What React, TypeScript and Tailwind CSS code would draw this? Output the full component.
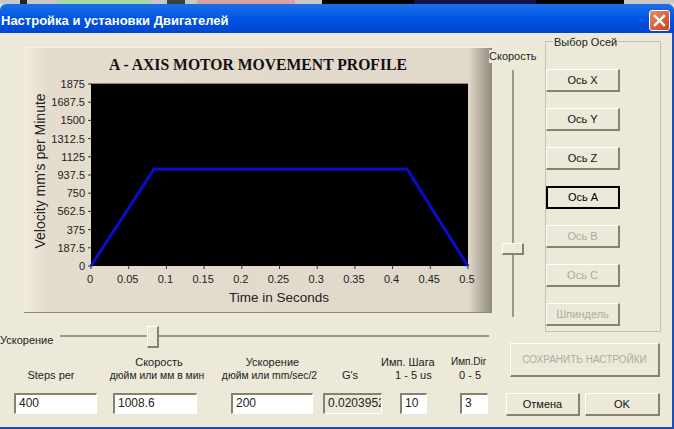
const yTicks = ["1875", "1687.5", "1500", "1312.5", "1125", "937.5", "750", "562.5", "375", "187.5", "0"];
const xTicks = ["0", "0.05", "0.1", "0.15", "0.2", "0.25", "0.3", "0.35", "0.4", "0.45", "0.5"];

const raised = "bg-[#ece9d8] border-t border-l border-t-white border-l-white border-r-2 border-b-2 border-r-[#85826f] border-b-[#85826f]";

function Chart() {
  // svg origin is the panel's top left corner (24,47)
  const plotL = 67;
  const plotR = 444;
  const plotT = 36;
  const plotB = 218;
  const stepY = (plotB - plotT) / 10;
  const stepX = (plotR - plotL) / 10;
  return (
    <svg width="468" height="264" className="block">
      <rect x={plotL} y={plotT} width={plotR - plotL} height={plotB - plotT} fill="#000" />
      <rect x={plotL - 1} y={plotT - 1} width={plotR - plotL + 1} height="1" fill="#8f8a7c" />
      {yTicks.map((t, i) => (
        <g key={t}>
          <line x1={plotL - 3} x2={plotL} y1={plotT + i * stepY} y2={plotT + i * stepY} stroke="#333" />
          <text x={plotL - 6} y={plotT + i * stepY + 4} textAnchor="end" fontSize="11" fill="#222" fontFamily="Liberation Sans">
            {t}
          </text>
        </g>
      ))}
      {xTicks.map((t, i) => (
        <g key={t}>
          <line x1={plotL + i * stepX} x2={plotL + i * stepX} y1={plotB} y2={plotB + 3} stroke="#333" />
          <text x={plotL + i * stepX - 1} y={plotB + 17} textAnchor="middle" fontSize="11" fill="#222" fontFamily="Liberation Sans">
            {t}
          </text>
        </g>
      ))}
      <polyline
        points={`${plotL},${plotB} 130,121 383,121 ${plotR},${plotB}`}
        fill="none"
        stroke="#0c0cd0"
        strokeWidth="3"
      />
      <text x="255" y="254" textAnchor="middle" fontSize="13.5" fill="#222" fontFamily="Liberation Sans">
        Time in Seconds
      </text>
      <text
        x="0"
        y="0"
        textAnchor="middle"
        fontSize="14"
        fill="#222"
        fontFamily="Liberation Sans"
        transform="translate(21,123) rotate(-90)"
      >
        Velocity mm's per Minute
      </text>
    </svg>
  );
}

function AxisButton({ label, state }: { label: string; state?: "active" | "disabled" }) {
  if (state === "active") {
    return (
      <div className="w-[74px] h-[23px] text-[11px] flex items-center justify-center bg-[#ece9d8] border-2 border-black text-black">
        {label}
      </div>
    );
  }
  return (
    <div className={`w-[74px] h-[23px] text-[11px] flex items-center justify-center ${raised} ${state === "disabled" ? "text-[#aeaba0]" : "text-[#111]"}`}>
      {label}
    </div>
  );
}

function Field({ value, className, disabled }: { value: string; className: string; disabled?: boolean }) {
  return (
    <div
      className={`h-[21px] border-t-2 border-l-2 border-t-[#85826f] border-l-[#85826f] border-r border-b border-r-white border-b-white pl-[3px] text-[12px] leading-[17px] overflow-hidden whitespace-nowrap text-[#222] ${
        disabled ? "bg-[#ece9d8]" : "bg-white"
      } ${className}`}
    >
      {value}
    </div>
  );
}

export default function App() {
  return (
    <div className="w-[674px] h-[429px] overflow-hidden bg-[#ece9d8] flex flex-col font-['Liberation_Sans',sans-serif]">
      <div className="h-[4px] flex shrink-0 bg-[#c8c8c8]">
        <div className="w-[20px]" />
        <div className="w-[7px] bg-[#222]" />
        <div className="w-[31px]" />
        <div className="w-[92px] bg-[#a8d8a8]" />
        <div className="w-[17px]" />
        <div className="w-[18px] bg-[#33463c]" />
        <div className="w-[12px]" />
        <div className="w-[98px] bg-[#d8a0a0]" />
        <div className="w-[27px]" />
        <div className="w-[92px] bg-black" />
        <div className="w-[122px] bg-[#10104a]" />
        <div className="w-[88px] bg-black" />
      </div>

      <div className="h-[29px] shrink-0 flex items-center justify-between pt-[4px] pr-[4px] pl-[1px] rounded-t-[6px] bg-gradient-to-b from-[#1c6ee8] via-[#0055e3] to-[#0046cc]">
        <span className="text-white font-bold text-[13px]">Настройка и установки Двигателей</span>
        <div className="w-[21px] h-[21px] rounded-[3px] border border-white bg-gradient-to-br from-[#e88a6a] to-[#c8401c] flex items-center justify-center">
          <svg width="13" height="13" viewBox="0 0 13 13">
            <path d="M2 2 L11 11 M11 2 L2 11" stroke="#fff" strokeWidth="2.4" strokeLinecap="square" />
          </svg>
        </div>
      </div>

      <div className="flex flex-1 min-h-0 border-b-2 border-b-[#1f50b8] border-r-2 border-r-[#1f50b8]">
        <div className="w-[489px] shrink-0 flex flex-col">
          <div className="ml-[24px] mt-[14px] w-[468px] h-[266px] shrink-0 flex flex-col bg-[linear-gradient(to_right,#f2ecdc_0%,#e4dccd_5%,#e0d9ca_95%,#8f897b_100%)] border-t border-t-[#f4f0e4] border-b border-b-[#8f8a7c]">
            <div className="h-[36px] pt-[7px] text-center text-[15.7px] leading-[20px] font-bold font-['Liberation_Serif',serif] text-[#111]">
              A - AXIS MOTOR MOVEMENT PROFILE
            </div>
            <div className="-mt-[36px]">
              <Chart />
            </div>
          </div>

          <div className="flex items-center mt-[16px] h-[16px] shrink-0">
            <span className="text-[11px] text-[#222] w-[60px] mt-[6px]">Ускорение</span>
            <div className="relative w-[430px] h-[2px] bg-[#9c9888] -mt-[2px]">
              <div className={`absolute left-[87px] -top-[9px] w-[12px] h-[22px] ${raised}`} />
            </div>
          </div>

          <div className="flex items-end h-[37px] text-[11px] leading-[13px] text-[#222] shrink-0">
            <div className="w-[102px] text-center">Steps per</div>
            <div className="w-[110px] text-center whitespace-nowrap">
              <div className="pl-[4px]">Скорость</div>
              <div className="text-[10.4px]">дюйм или мм в мин</div>
            </div>
            <div className="w-[115px] text-center whitespace-nowrap">
              <div className="pl-[6px]">Ускорение</div>
              <div className="text-[10.4px]">дюйм или mm/sec/2</div>
            </div>
            <div className="w-[43px] text-center pl-[3px]">G's</div>
            <div className="w-[73px] pl-[11px] whitespace-nowrap">
              <div>Имп. Шага</div>
              <div className="pl-[14px]">1 - 5 us</div>
            </div>
            <div className="flex-1 whitespace-nowrap pl-[8px]">
              <div className="text-[10px]">Имп.Dir</div>
              <div className="pl-[8px] mt-[1px]">0 - 5</div>
            </div>
          </div>

          <div className="flex mt-[11px] pl-[14px] shrink-0">
            <Field value="400" className="w-[83px]" />
            <Field value="1008.6" className="w-[84px] ml-[16px]" />
            <Field value="200" className="w-[82px] ml-[34px]" />
            <Field value="0.020395236" className="w-[59px] ml-[10px]" disabled />
            <Field value="10" className="w-[27px] ml-[18px]" />
            <Field value="3" className="w-[28px] ml-[33px]" />
          </div>
        </div>

        <div className="flex-1 flex flex-col relative">
          <div className="flex h-[299px] shrink-0">
            <div className="w-[56px] flex flex-col">
              <div className="mt-[17px] h-[13px] text-[11px] leading-[13px] text-[#222] bg-[#ece9d8] w-[48px]">Скорость</div>
              <div className="relative ml-[23px] mt-[7px] w-[2px] h-[247px] bg-[#9c9888]">
                <div className={`absolute -left-[10px] top-[173px] w-[22px] h-[12px] ${raised}`} />
              </div>
            </div>
            <div className="relative mt-[8px] w-[116px] h-[291px] border border-[#c4c1b0]">
              <span className="absolute left-[7px] -top-[6px] bg-[#ece9d8] text-[11px] leading-[13px] px-[1px] text-[#222]">Выбор Осей</span>
              <div className="flex flex-col gap-[16px] pt-[27px]">
                <AxisButton label="Ось X" />
                <AxisButton label="Ось Y" />
                <AxisButton label="Ось Z" />
                <AxisButton label="Ось A" state="active" />
                <AxisButton label="Ось B" state="disabled" />
                <AxisButton label="Ось C" state="disabled" />
                <AxisButton label="Шпиндель" state="disabled" />
              </div>
            </div>
          </div>

          <div className={`ml-[21px] mt-[11px] w-[150px] h-[34px] flex items-center justify-center text-[10px] text-[#aeaba0] ${raised}`}>
            СОХРАНИТЬ НАСТРОЙКИ
          </div>

          <div className="flex ml-[17px] mt-[16px] gap-[5px]">
            <div className={`w-[74px] h-[23px] text-[11px] flex items-center justify-center text-[#111] ${raised}`}>Отмена</div>
            <div className={`w-[75px] h-[23px] text-[11px] flex items-center justify-center text-[#111] ${raised}`}>OK</div>
          </div>
        </div>
      </div>
    </div>
  );
}
